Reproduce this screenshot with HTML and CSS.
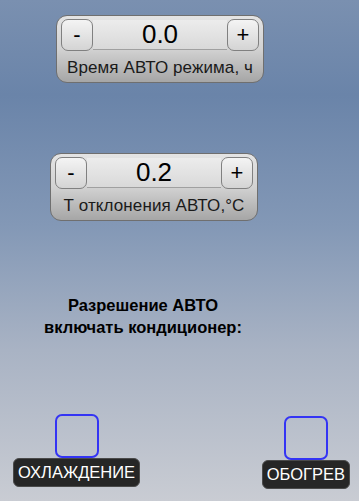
FILE: index.html
```html
<!DOCTYPE html>
<html lang="ru">
<head>
  <meta charset="UTF-8">
  <title>АВТО режим</title>
  <meta name="viewport" content="width=device-width, initial-scale=1.0" />
  <link rel="stylesheet" href="styles.css">
</head>
<body>
  <div class="screen">
    <div class="spin spin-time">
      <div class="spin-row">
        <button class="spin-btn">-</button>
        <div class="spin-value">0.0</div>
        <button class="spin-btn">+</button>
      </div>
      <div class="spin-label">Время АВТО режима, ч</div>
    </div>

    <div class="spin spin-dev">
      <div class="spin-row">
        <button class="spin-btn">-</button>
        <div class="spin-value">0.2</div>
        <button class="spin-btn">+</button>
      </div>
      <div class="spin-label">Т отклонения АВТО,°С</div>
    </div>

    <div class="note">Разрешение АВТО<br>включать кондиционер:</div>

    <div class="checks">
      <div class="check-col">
        <div class="check-box"></div>
        <div class="check-label">ОХЛАЖДЕНИЕ</div>
      </div>
      <div class="check-col check-col-heat">
        <div class="check-box"></div>
        <div class="check-label">ОБОГРЕВ</div>
      </div>
    </div>
  </div>
</body>
</html>
```

FILE: styles.css
```css
body {
  margin: 0;
  font-family: 'Liberation Sans', Arial, sans-serif;
  color: #111;
}

.screen {
  width: 359px;
  height: 501px;
  overflow: hidden;
  background: linear-gradient(to bottom, #7a90b0 0%, #6a84a9 19%, #8398b6 45%, #a9b3c4 70%, #c9ccd3 100%);
  padding-top: 15px;
  box-sizing: border-box;
}

.spin {
  width: 208px;
  height: 68px;
  box-sizing: border-box;
  border: 1px solid #6f6f6f;
  border-radius: 11px;
  background: linear-gradient(to bottom, #e4e4e4 0%, #d2d2d2 50%, #a6a6a6 100%);
  padding: 3px 4px 0;
}

.spin-time {
  margin-left: 56px;
}

.spin-dev {
  margin-left: 50px;
  margin-top: 70px;
}

.spin-row {
  display: flex;
  height: 32px;
}

.spin-btn {
  width: 32px;
  height: 32px;
  padding: 0;
  border: 1px solid #808080;
  border-radius: 7px;
  background: linear-gradient(to bottom, #f4f4f4, #d4d4d4);
  font-family: 'Liberation Sans', Arial, sans-serif;
  font-size: 22px;
  color: #000;
  line-height: 28px;
}

.spin-value {
  flex: 1;
  margin: 1px 0;
  background: linear-gradient(to bottom, #ececec, #d9d9d9);
  border-bottom: 1px solid #a0a0a0;
  text-align: center;
  font-size: 26px;
  line-height: 29px;
  color: #000;
}

.spin-label {
  padding-top: 4px;
  text-align: center;
  font-size: 17px;
  letter-spacing: 0.1px;
  line-height: 26px;
  color: #1a1a1a;
}

.note {
  width: 286px;
  margin-top: 73px;
  text-align: center;
  font-weight: bold;
  font-size: 16.5px;
  line-height: 22px;
  color: #000;
}

.checks {
  display: flex;
  justify-content: space-between;
  align-items: flex-start;
  padding: 0 9px 0 13px;
  margin-top: 76px;
}

.check-col {
  display: flex;
  flex-direction: column;
  align-items: center;
}

.check-col-heat {
  margin-top: 2px;
}

.check-box {
  width: 44px;
  height: 44px;
  box-sizing: border-box;
  border: 2px solid #3434f4;
  border-radius: 7px;
}

.check-label {
  background: #262626;
  border: 1px solid #4a4a4a;
  border-radius: 6px;
  color: #fff;
  font-size: 16.5px;
  line-height: 27px;
  padding: 0 4px;
}
```
